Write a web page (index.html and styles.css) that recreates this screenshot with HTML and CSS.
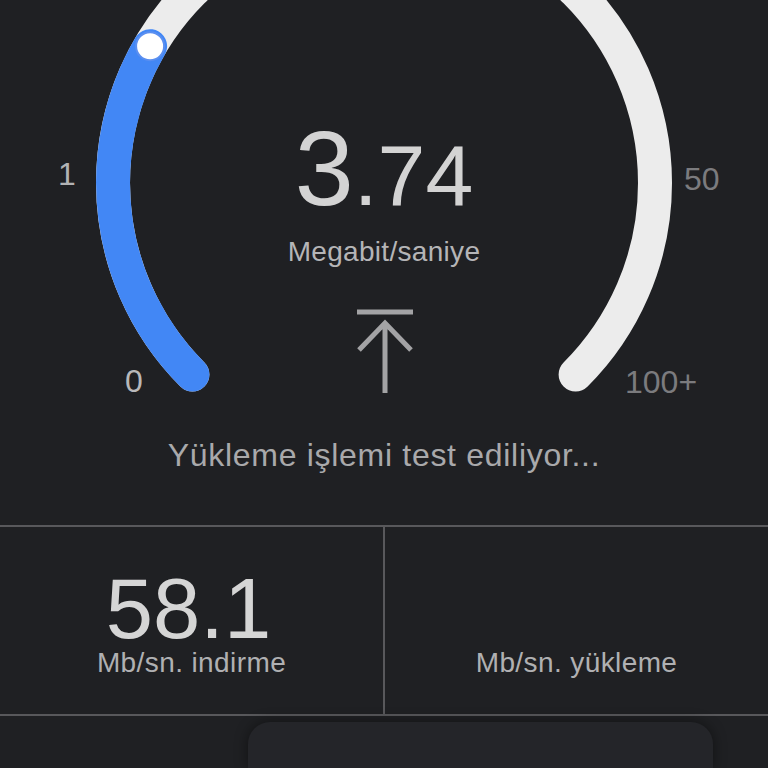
FILE: index.html
```html
<!DOCTYPE html>
<html lang="tr">
<head>
<meta charset="utf-8">
<title>Hız testi</title>
<link rel="stylesheet" href="styles.css">
</head>
<body>
<div class="screen">
  <section class="gauge">
    <svg class="dial" width="768" height="525" viewBox="0 0 768 525">
      <path class="track" d="M192.4 374.6 A271 271 0 1 1 575.6 374.6"/>
      <path class="fill" d="M192.4 374.6 A271 271 0 0 1 150.1 46.2"/>
      <circle class="knob" cx="150.1" cy="46.2" r="14"/>
    </svg>
    <span class="tick tick-1">1</span>
    <span class="tick tick-0">0</span>
    <span class="tick tick-50">50</span>
    <span class="tick tick-100">100+</span>
    <div class="readout">
      <div class="value"><span class="big">3</span><span class="small">.74</span></div>
      <div class="unit">Megabit/saniye</div>
      <svg class="arrow" width="60" height="90" viewBox="0 0 60 90">
        <path d="M2 6 H58 M30 17 V87 M4 44 L30 17 L56 44"/>
      </svg>
      <div class="status">Yükleme işlemi test ediliyor...</div>
    </div>
  </section>
  <section class="stats">
    <div class="stat stat-left">
      <div class="stat-value">58.1</div>
      <div class="stat-label">Mb/sn. indirme</div>
    </div>
    <div class="stat">
      <div class="stat-label">Mb/sn. yükleme</div>
    </div>
  </section>
  <div class="card"></div>
</div>
</body>
</html>
```
FILE: styles.css
```css
* { box-sizing: border-box; }
html, body {
  margin: 0;
  padding: 0;
  background: #1f2023;
  height: 768px;
  overflow: hidden;
  font-family: "Liberation Sans", Arial, sans-serif;
}
.screen {
  width: 768px;
  height: 768px;
  display: flex;
  flex-direction: column;
}
.gauge {
  position: relative;
  height: 525px;
  flex: none;
}
.dial {
  position: absolute;
  left: 0;
  top: 0;
}
.track, .fill {
  fill: none;
  stroke-width: 34;
  stroke-linecap: round;
}
.track { stroke: #ececec; }
.fill { stroke: #4287f5; }
.knob {
  fill: #ffffff;
  stroke: #5b8ff0;
  stroke-width: 2;
}
.tick {
  position: absolute;
  font-size: 32px;
  line-height: 1;
}
.tick-1 { left: 58px; top: 158px; color: #b2b2b4; }
.tick-0 { left: 125px; top: 365px; color: #b8b8ba; }
.tick-50 { left: 684px; top: 163px; color: #7b7b7e; }
.tick-100 { left: 625px; top: 366px; color: #7b7b7e; }
.readout {
  position: relative;
  display: flex;
  flex-direction: column;
  align-items: center;
  padding-top: 115px;
}
.value {
  color: #d3d3d3;
  line-height: 1;
  height: 106px;
  white-space: nowrap;
}
.big { font-size: 106px; }
.small { font-size: 86px; }
.unit {
  margin-top: 17px;
  font-size: 28px;
  line-height: 1;
  letter-spacing: 0.3px;
  color: #b5b5b7;
}
.arrow {
  margin-top: 40px;
  margin-left: 2px;
}
.arrow path {
  fill: none;
  stroke: #a3a3a5;
  stroke-width: 5;
}
.status {
  margin-top: 43px;
  font-size: 32px;
  line-height: 1;
  letter-spacing: 0.7px;
  color: #a9a9ab;
}
.stats {
  flex: none;
  height: 191px;
  display: grid;
  grid-template-columns: 385px 383px;
  border-top: 2px solid #58585b;
  border-bottom: 2px solid #58585b;
}
.stat {
  display: flex;
  flex-direction: column;
  align-items: center;
  justify-content: flex-end;
  padding-bottom: 37px;
}
.stat-left {
  border-right: 2px solid #58585b;
}
.stat-value {
  font-size: 85px;
  line-height: 81px;
  color: #d5d5d5;
  margin-left: -6px;
}
.stat-label {
  font-size: 28px;
  line-height: 1;
  letter-spacing: 0.4px;
  color: #b0b0b2;
}
.card {
  flex: 1;
  width: 465px;
  margin: 6px 0 0 248px;
  background: #242529;
  border-radius: 22px 22px 0 0;
  box-shadow: 0 0 14px rgba(0, 0, 0, 0.45);
}
```
